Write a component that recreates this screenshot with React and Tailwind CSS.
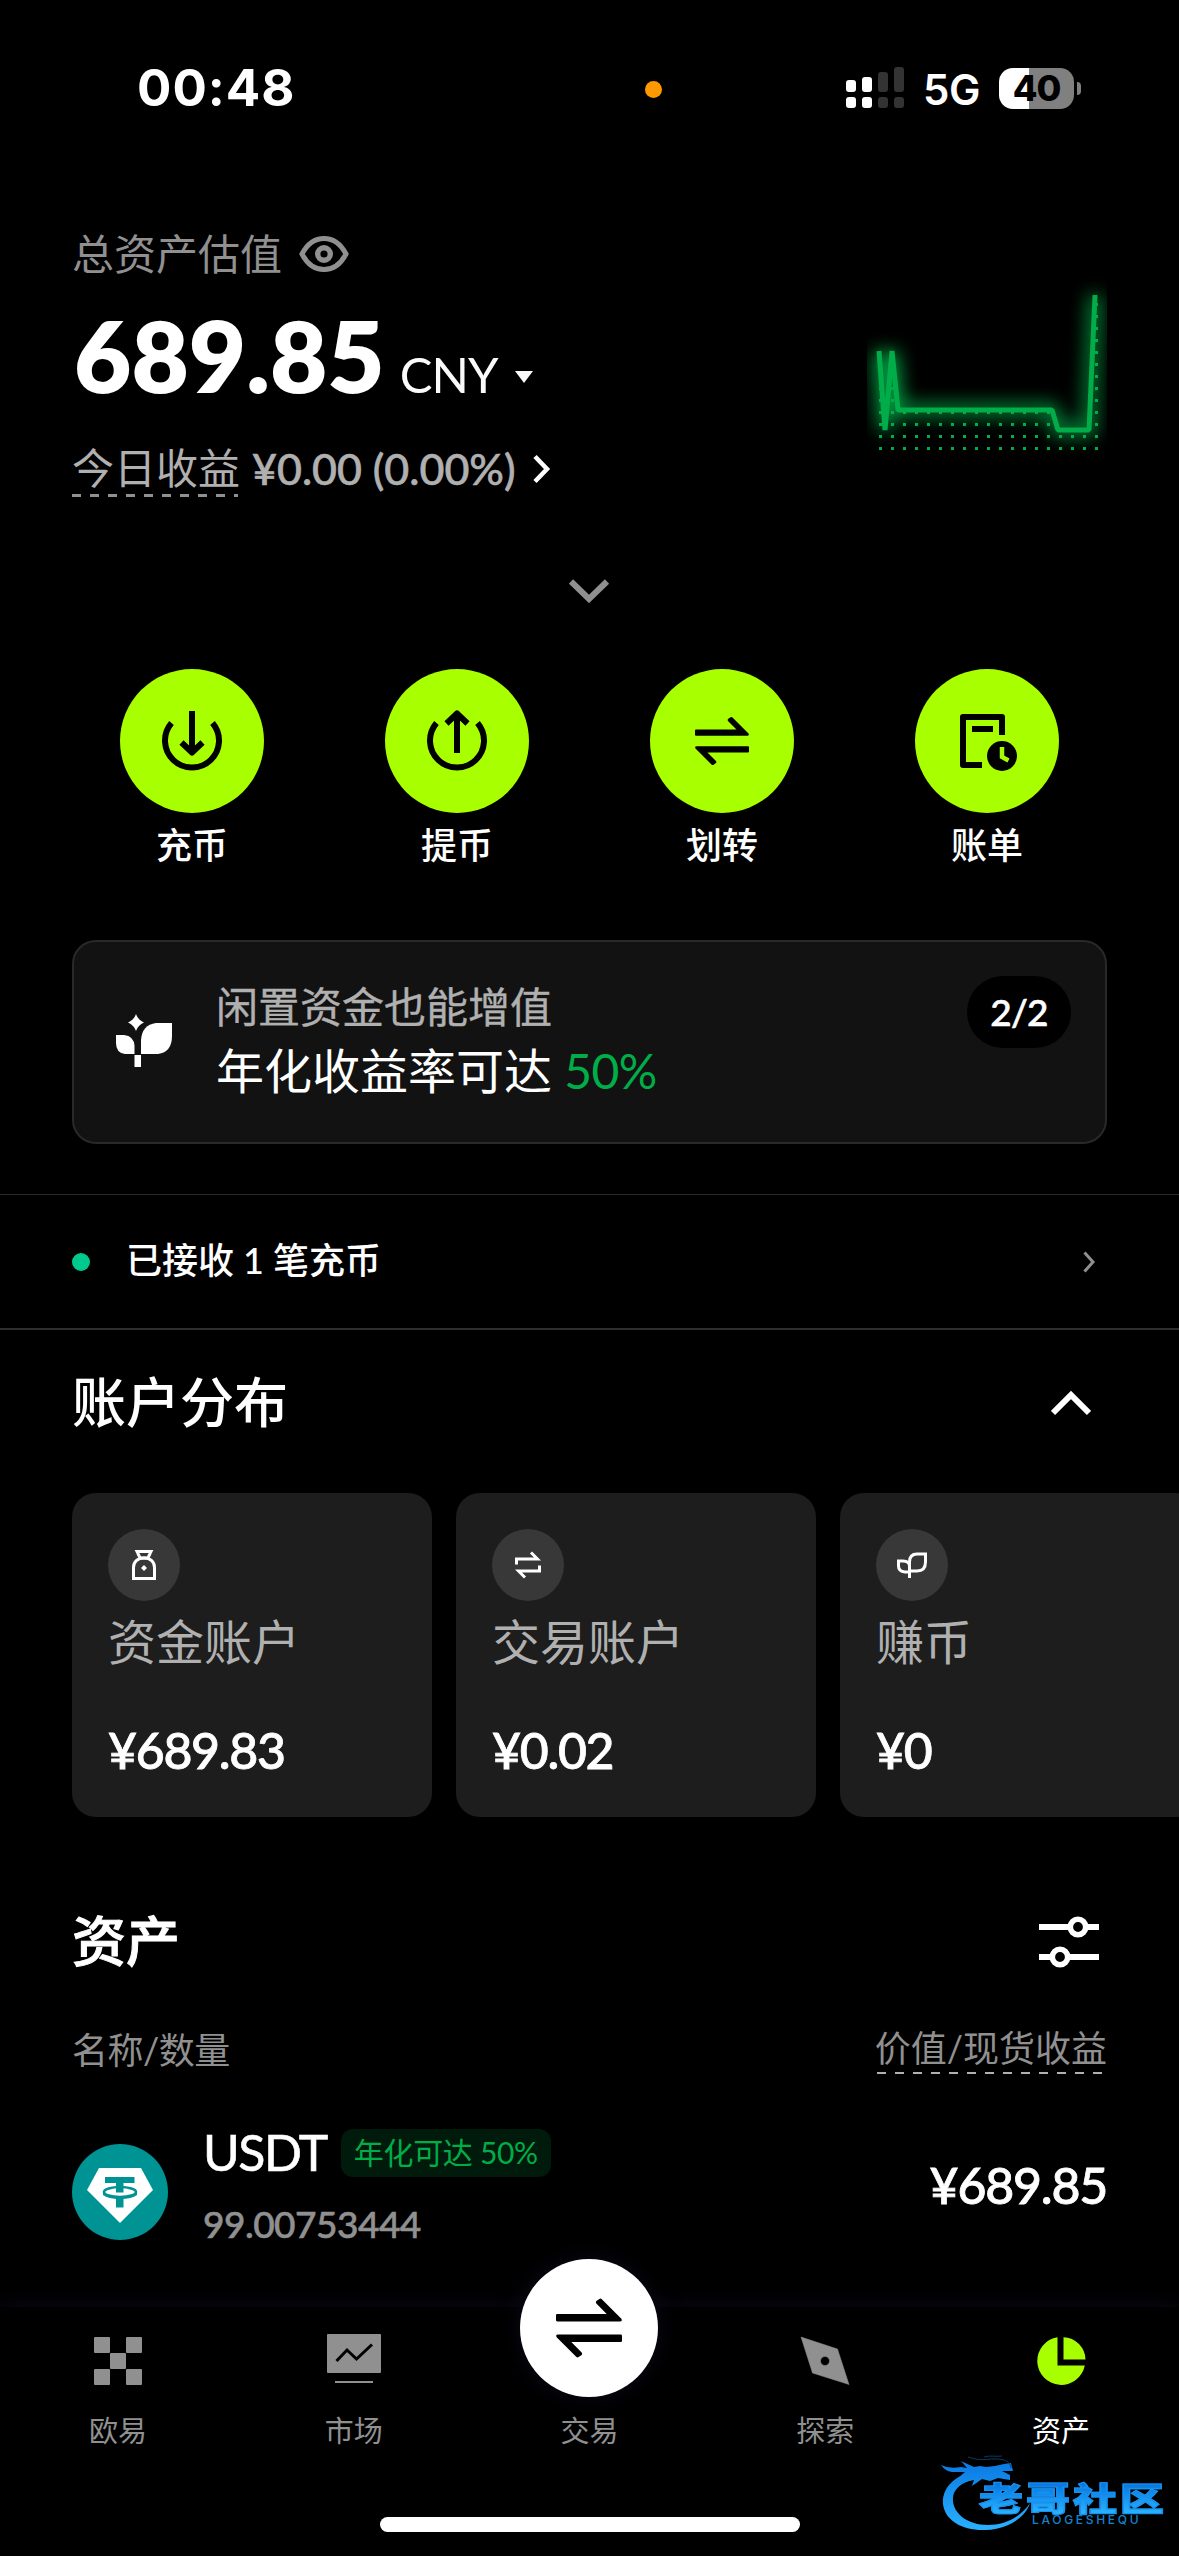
import React from 'react';

const SignalIcon = () => (
    <svg width="58" height="42" viewBox="0 0 58 42">
        <g fill="#fff">
            <rect x="0" y="13" width="10" height="12" rx="3" />
            <rect x="16" y="10" width="10" height="15" rx="3" />
            <rect x="0" y="30" width="10" height="11" rx="3" />
            <rect x="16" y="30" width="10" height="11" rx="3" />
        </g>
        <g fill="#333">
            <rect x="32" y="5" width="10" height="20" rx="3" />
            <rect x="48" y="0" width="10" height="25" rx="3" />
            <rect x="32" y="30" width="10" height="11" rx="3" />
            <rect x="48" y="30" width="10" height="11" rx="3" />
        </g>
    </svg>
);

const EyeIcon = () => (
    <svg width="50" height="38" viewBox="0 0 50 38" fill="none" stroke="#909090" strokeWidth="5">
        <path d="M3 19C8 9.500 16 3.500 25 3.500S42 9.500 47 19C42 28.500 34 34.500 25 34.500S8 28.500 3 19Z" />
        <circle cx="25" cy="19" r="6.300" strokeWidth="5.400" />
    </svg>
);

const DepositIcon = () => (
    <svg width="72" height="72" viewBox="0 0 72 72" fill="none" stroke="#000" strokeWidth="6" strokeLinejoin="round">
        <path d="M15.500 18A27 27 0 1 0 56.500 18" />
        <path d="M36 6V46M25.500 37.500L36 47.500L46.500 37.500" />
    </svg>
);

const WithdrawIcon = () => (
    <svg width="72" height="72" viewBox="0 0 72 72" fill="none" stroke="#000" strokeWidth="6" strokeLinejoin="round">
        <path d="M15.500 18A27 27 0 1 0 56.500 18" />
        <path d="M36 48V8M25.500 18.500L36 8.500L46.500 18.500" />
    </svg>
);

const SwapIcon = ({ size = 72 }) => (
    <svg width={size} height={size} viewBox="0 0 72 72" fill="#000">
        <path d="M10 24.500H50.500L42 16Q41.200 15 42 14L44.500 12.200Q45.500 11.600 46.500 12.500L62.500 28.500Q63.500 30.500 61.500 30.700H10Q9 30.700 9 29.500V25.500Q9 24.500 10 24.500Z" />
        <path d="M62 47.500H21.500L30 56Q30.800 57 30 58L27.500 59.800Q26.500 60.400 25.500 59.500L9.500 43.500Q8.500 41.500 10.500 41.300H62Q63 41.300 63 42.500V46.500Q63 47.500 62 47.500Z" />
    </svg>
);

const BillIcon = () => (
    <svg width="72" height="72" viewBox="0 0 72 72" fill="none" stroke="#000" strokeWidth="6" strokeLinejoin="round">
        <path d="M31 60H12V12H51V30" />
        <path d="M21 24H42" />
        <circle cx="51" cy="51" r="15" fill="#000" stroke="none" />
        <path d="M51 42V52L57.500 55.500" stroke="#a8ff00" strokeWidth="4.500" strokeLinejoin="miter" />
    </svg>
);

const SproutIcon = () => (
    <svg width="56" height="56" viewBox="0 0 56 56" fill="#fff">
        <path d="M20 0Q22 6 28 8.500Q22 11 20 17Q18 11 12 8.500Q18 6 20 0Z" />
        <path d="M0 21H8Q18 22 18.500 32V40H9Q0 39 0 29Z" />
        <path d="M25 40V26Q26 11 40 9H56V22Q56 38 42 40Z" />
        <rect x="18.500" y="41" width="6.500" height="12" />
    </svg>
);

const BagIcon = () => (
    <svg width="24" height="30" viewBox="0 0 24 30" fill="none" stroke="#fff" strokeWidth="3">
        <path d="M5 1.500H19L16 8H8Z" />
        <path d="M1.500 28.500V17.500C1.500 12 5.500 8 12 8S22.500 12 22.500 17.500V28.500Z" />
        <path d="M12 15L15 18L12 21L9 18Z" fill="#fff" stroke="none" />
    </svg>
);

const TransferIcon = () => (
    <svg width="26" height="28" viewBox="0 0 26 28" fill="none" stroke="#fff" strokeWidth="3">
        <path d="M1.500 13.500V8H22.500L16 1.500" />
        <path d="M24.500 14.500V20H3.500L10 26.500" />
    </svg>
);

const EarnIcon = () => (
    <svg width="30" height="26" viewBox="0 0 30 26" fill="none" stroke="#fff" strokeWidth="3">
        <path d="M12.500 26V10Q12.500 2 20 2H28.500V10Q28.500 19 20 19H12.500" />
        <path d="M12.500 20H8Q1.500 19.500 1.500 14V9H6Q12.500 9 12.500 14" />
    </svg>
);

const TetherIcon = () => (
    <svg width="96" height="96" viewBox="0 0 96 96">
        <circle cx="48" cy="48" r="48" fill="#009393" />
        <path d="M27 24H69L81 46L48 79L15 46Z" fill="#fff" strokeLinejoin="round" />
        <path d="M33 33H62.500V39H51.500V48.500H44V39H33Z" fill="#009393" />
        <ellipse cx="48" cy="48" rx="16" ry="5" fill="none" stroke="#009393" strokeWidth="2.600" />
        <path d="M44 53H51.500V63.500H44Z" fill="#009393" />
        <path d="M31 48V51Q36 55 48 55T65 51V48Q60 53 48 53T31 48Z" fill="#009393" />
    </svg>
);

const FilterIcon = () => (
    <svg width="60" height="54" viewBox="0 0 60 54" fill="none" stroke="#fff">
        <path d="M0 12H29M49 12H60M0 42H11M31 42H60" strokeWidth="6" />
        <circle cx="39" cy="12" r="7.700" strokeWidth="5.600" />
        <circle cx="21" cy="42" r="7.700" strokeWidth="5.600" />
    </svg>
);

// 24h asset curve, dots fill the area under the line
const curve = [[12, 76], [18, 155], [25, 76], [31, 135], [185, 135], [191, 155], [222, 155], [228, 20]];

const lineY = (x) => {
    for (let i = 1; i < curve.length; i++) {
        const [x1, y1] = curve[i - 1];
        const [x2, y2] = curve[i];
        if (x <= x2) return y1 + ((x - x1) / (x2 - x1)) * (y2 - y1);
    }
    return curve[curve.length - 1][1];
};

const AssetChart = () => {
    const dots = [];
    for (let col = 0; col < 19; col++) {
        for (let row = 0; row < 13; row++) {
            const x = 13.500 + col * 12;
            const y = 173.500 - row * 12;
            if (y > lineY(x)) dots.push([x, y]);
        }
    }
    const points = curve.map((p) => p.join(',')).join(' ');
    return (
        <svg width="240" height="220" viewBox="0 0 240 220" fill="none">
            <defs>
                <filter id="glow" x="-20%" y="-40%" width="140%" height="180%">
                    <feGaussianBlur stdDeviation="9" />
                </filter>
            </defs>
            <polyline points={points} stroke="#00ad48" strokeWidth="12" opacity="0.9" filter="url(#glow)" />
            {dots.map(([x, y]) => (
                <rect key={`${x}-${y}`} x={x - 1.500} y={y - 1.500} width="3" height="3" fill="#00ad48" />
            ))}
            <polyline points={points} stroke="#00ad48" strokeWidth="5" strokeLinejoin="bevel" />
        </svg>
    );
};

const DashLine = ({ width, color, height }) => (
    <svg width={width} height={height} className="block">
        <path d={`M0 ${height / 2}H${width}`} stroke={color} strokeWidth={height} strokeDasharray="9 9" />
    </svg>
);

const actions = [
    { label: '充币', icon: <DepositIcon /> },
    { label: '提币', icon: <WithdrawIcon /> },
    { label: '划转', icon: <SwapIcon /> },
    { label: '账单', icon: <BillIcon /> },
];

const accounts = [
    { name: '资金账户', amount: '¥689.83', icon: <BagIcon /> },
    { name: '交易账户', amount: '¥0.02', icon: <TransferIcon /> },
    { name: '赚币', amount: '¥0', icon: <EarnIcon /> },
];

const tabs = [
    {
        label: '欧易',
        icon: (
            <svg width="60" height="60" viewBox="0 0 60 60" fill="#909090">
                <rect x="6" y="6" width="16" height="16" rx="1" />
                <rect x="38" y="6" width="16" height="16" rx="1" />
                <rect x="22" y="22" width="16" height="16" rx="1" />
                <rect x="6" y="38" width="16" height="16" rx="1" />
                <rect x="38" y="38" width="16" height="16" rx="1" />
            </svg>
        ),
    },
    {
        label: '市场',
        icon: (
            <svg width="60" height="60" viewBox="0 0 60 60" fill="none">
                <rect x="3" y="3" width="54" height="39" rx="1" fill="#909090" />
                <path d="M12.500 30L23 19L32.500 28L48 13.500" stroke="#000" strokeWidth="3" />
                <path d="M11 51H49" stroke="#909090" strokeWidth="2" />
            </svg>
        ),
    },
    { label: '交易', center: true },
    {
        label: '探索',
        icon: (
            <svg width="60" height="60" viewBox="0 0 60 60" fill="#909090">
                <path fillRule="evenodd" d="M6 6L42.500 18L54 53.500L17.500 42Z M30 25.500A4.500 4.500 0 1 0 30 34.500A4.500 4.500 0 1 0 30 25.500Z" stroke="#909090" strokeWidth="0.500" />
            </svg>
        ),
    },
    {
        label: '资产',
        active: true,
        icon: (
            <svg width="60" height="60" viewBox="0 0 60 60" fill="#a8ff00">
                <path d="M26.500 6.200A24 24 0 1 0 53.800 34.500H26.500Z" />
                <path d="M32.500 6.200V28.500H54.500Q54.500 20 48 13Q41.500 6.500 32.500 6.200Z" />
            </svg>
        ),
    },
];

const App = () => {
    return (
        <div className="w-[1179px] h-[2556px] bg-black text-white overflow-hidden relative flex flex-col font-[Lato,'Noto_Sans_CJK_SC',sans-serif]">
            {/* Status bar */}
            <div className="h-[176px] shrink-0 flex items-center pl-[137px] pr-[98px] font-[Inter,sans-serif]">
                <div className="w-[508px] text-[51px] leading-[60px] font-bold tracking-[1px]">00:48</div>
                <div className="w-[17px] h-[17px] mt-[3px] rounded-full bg-[#ff9900]"></div>
                <div className="ml-auto flex items-center">
                    <SignalIcon />
                    <span className="w-[74px] ml-[19px] text-[42px] leading-[50px] font-semibold mt-[3px] tracking-[-0.5px]">5G</span>
                    <div className="w-[75px] h-[41px] ml-[2px] rounded-[14px] bg-[linear-gradient(90deg,#fff_40%,#808080_40%)] flex items-center justify-center text-black text-[36px] leading-none font-extrabold tracking-[-1px]">
                        40
                    </div>
                    <div className="w-[4px] h-[13px] ml-[3px] rounded-r-full bg-[#808080]"></div>
                </div>
            </div>

            {/* Balance */}
            <div className="h-[369px] shrink-0 flex justify-between px-[72px]">
                <div className="pt-[54px]">
                    <div className="flex items-center h-[48px]">
                        <span className="text-[42px] leading-[48px] text-[#909090]">总资产估值</span>
                        <span className="ml-[17px]"><EyeIcon /></span>
                    </div>
                    <div className="flex items-baseline h-[100px] mt-[27px] pl-[2px]">
                        <span className="text-[99px] leading-[100px] font-extrabold">689.85</span>
                        <span className="ml-[15px] text-[49px] leading-[60px] tracking-[-1px] text-[#fafafa]">CNY</span>
                        <svg width="18" height="22" viewBox="0 0 18 22" className="ml-[17px]">
                            <path d="M0 0H18L9 12Z" fill="#fafafa" />
                        </svg>
                    </div>
                    <div className="flex items-center h-[48px] mt-[40px] text-[#b0b0b0]">
                        <div className="flex flex-col mt-[4px]">
                            <span className="text-[42px] leading-[46px]">今日收益</span>
                            <div className="mt-[3px]">
                                <DashLine width={166} height={3} color="#909090" />
                            </div>
                        </div>
                        <span className="ml-[12px] text-[43px] leading-[48px] font-medium [-webkit-text-stroke:0.6px]">¥0.00 (0.00%)</span>
                        <svg width="18" height="30" viewBox="0 0 18 30" className="ml-[17px]" fill="none" stroke="#fff" strokeWidth="4.500">
                            <path d="M2 2.500L14 15L2 27.500" />
                        </svg>
                    </div>
                </div>
                <div className="pt-[99px]">
                    <AssetChart />
                </div>
            </div>

            <div className="h-[91px] shrink-0 flex items-center justify-center">
                <svg width="41" height="24" viewBox="0 0 41 24" fill="none" stroke="#909090" strokeWidth="6">
                    <path d="M2 2.500L20 20L38 2.500" />
                </svg>
            </div>

            {/* Quick actions */}
            <div className="grid grid-cols-4 px-[59.5px] mt-[33px]">
                {actions.map((a) => (
                    <div key={a.label} className="flex flex-col items-center">
                        <div className="w-[144px] h-[144px] rounded-full bg-[#a8ff00] flex items-center justify-center">{a.icon}</div>
                        <span className="mt-[12px] text-[36px] leading-[40px] font-medium">{a.label}</span>
                    </div>
                ))}
            </div>

            {/* Promo */}
            <div className="h-[204px] shrink-0 mx-[72px] mt-[75px] rounded-[24px] border-2 border-[#292929] bg-[#121212] flex pl-[42px] pr-[34px]">
                <div className="pt-[72px]">
                    <SproutIcon />
                </div>
                <div className="ml-[44px] pt-[41px] flex flex-col">
                    <span className="text-[42px] leading-[48px] text-[#b0b0b0] [-webkit-text-stroke:0.4px]">闲置资金也能增值</span>
                    <span className="mt-[12px] text-[48px] leading-[56px]">
                        年化收益率可达 <span className="text-[#00ad48] tracking-[-0.6px]">50%</span>
                    </span>
                </div>
                <div className="ml-auto mt-[34px] w-[104px] h-[72px] rounded-full bg-black flex items-center justify-center text-[37px] leading-[40px] font-medium tracking-[-0.8px] [-webkit-text-stroke:0.6px]">
                    2/2
                </div>
            </div>

            {/* Notice */}
            <div className="h-[136px] shrink-0 mt-[50px] border-t border-b-2 border-t-[#2a2a2a] border-b-[#2e2e2e] flex items-center pl-[72px] pr-[84px]">
                <div className="w-[18px] h-[18px] rounded-full bg-[#00c98d]"></div>
                <span className="ml-[36px] mb-[3px] text-[36px] leading-[40px] font-medium">已接收 1 笔充币</span>
                <svg width="12" height="22" viewBox="0 0 12 22" className="ml-auto" fill="none" stroke="#909090" strokeWidth="3">
                    <path d="M1.500 1.500L10 11L1.500 20.500" />
                </svg>
            </div>

            {/* Accounts */}
            <div className="h-[146px] shrink-0 flex items-center justify-between pl-[72px] pr-[88px]">
                <h2 className="text-[54px] leading-[60px] font-medium">账户分布</h2>
                <svg width="40" height="26" viewBox="0 0 40 26" fill="none" stroke="#fff" strokeWidth="6">
                    <path d="M2 23L20 5L38 23" />
                </svg>
            </div>
            <div className="flex gap-[24px] pl-[72px] mt-[17px] overflow-hidden shrink-0">
                {accounts.map((acc) => (
                    <div key={acc.name} className="w-[360px] h-[324px] shrink-0 rounded-[24px] bg-[#1d1d1d] p-[36px] flex flex-col">
                        <div className="w-[72px] h-[72px] shrink-0 rounded-full bg-[#383838] flex items-center justify-center">{acc.icon}</div>
                        <span className="mt-[13px] text-[48px] leading-[56px] text-[#b0b0b0]">{acc.name}</span>
                        <span className="mt-[50px] text-[50px] leading-[60px] font-medium tracking-[-1.3px] [-webkit-text-stroke:0.8px]">{acc.amount}</span>
                    </div>
                ))}
            </div>

            {/* Assets */}
            <div className="h-[80px] shrink-0 mt-[85px] flex items-center justify-between pl-[72px] pr-[80px]">
                <h2 className="text-[54px] leading-[60px] font-medium [-webkit-text-stroke:1px]">资产</h2>
                <FilterIcon />
            </div>
            <div className="h-[48px] shrink-0 mt-[44px] flex justify-between px-[72px] text-[36px] leading-[44px] text-[#909090]">
                <span className="mt-[2px] tracking-[-0.5px]">名称/数量</span>
                <div className="flex flex-col items-end">
                    <span>价值/现货收益</span>
                    <div className="mt-[2px]">
                        <DashLine width={230} height={2} color="#b0b0b0" />
                    </div>
                </div>
            </div>
            <div className="h-[111px] shrink-0 mt-[55px] flex px-[72px]">
                <div className="pt-[15px]"><TetherIcon /></div>
                <div className="ml-[35px] flex flex-col">
                    <div className="flex items-center h-[48px]">
                        <span className="mb-[3px] text-[50px] leading-[48px] tracking-[-1.5px] [-webkit-text-stroke:0.6px]">USDT</span>
                        <span className="ml-[14px] h-[48px] w-[210px] rounded-[12px] bg-[#001a0b] text-[#00ad48] text-[30px] leading-[46px] tracking-[-0.3px] text-center">年化可达 50%</span>
                    </div>
                    <span className="mt-[25px] text-[37px] leading-[44px] font-medium tracking-[-0.5px] text-[#909090] [-webkit-text-stroke:0.6px]">99.00753444</span>
                </div>
                <span className="ml-auto mt-[26px] text-[50px] leading-[60px] font-medium tracking-[-1.2px] [-webkit-text-stroke:0.8px]">¥689.85</span>
            </div>

            {/* Tab bar */}
            <div className="h-[249px] shrink-0 mt-[67px] bg-black shadow-[0_0_24px_#0a0a18]">
                <div className="grid grid-cols-5">
                    {tabs.map((tab) => (
                        <div key={tab.label} className="flex flex-col items-center">
                            {tab.center ? (
                                <div className="w-[138px] h-[138px] -mt-[48px] rounded-full bg-white flex items-center justify-center shadow-[0_0_24px_#0a0a18]">
                                    <SwapIcon size={88} />
                                </div>
                            ) : (
                                <div className="pt-[24px] h-[90px]">{tab.icon}</div>
                            )}
                            <span className={`mt-[16px] text-[29px] leading-[36px] ${tab.active ? 'text-white' : 'text-[#909090]'}`}>{tab.label}</span>
                        </div>
                    ))}
                </div>
                <div className="w-[420px] h-[15px] rounded-full bg-white mx-auto mt-[68px]"></div>
            </div>

            {/* Community watermark */}
            <div className="absolute left-[940px] top-[2454px] w-[225px] h-[80px]">
                <svg width="92" height="80" viewBox="0 0 92 80" className="absolute left-0 top-0">
                    <defs>
                        <linearGradient id="wm" x1="0" y1="0" x2="0" y2="80" gradientUnits="userSpaceOnUse">
                            <stop offset="0" stopColor="#0673e0" />
                            <stop offset="1" stopColor="#2bb4ff" />
                        </linearGradient>
                    </defs>
                    <g fill="url(#wm)">
                        <path d="M30 18C9 25 2 38 3 50C5 67 23 77 46 76C68 75 86 63 90 49C80 64 64 71 48 71C28 71 14 60 13 47C12 36 20 28 37 25Z" />
                        <path d="M1 11Q9 15 21 13L27 14L21 7L34 13L40 12L46 13L55 12L64 10L71 9L73 17L62 17L70 21L70 26L58 24L50 27L42 25L32 32L34 26L24 28L28 23L18 24L25 18L12 18Q5 17 1 11Z" />
                    </g>
                    <path d="M28 3C42 8 50 4 58 5S70 7 71 14M44 3C50 1 56 3 62 2" fill="none" stroke="#0a3a66" strokeWidth="1" />
                </svg>
                <div className="absolute left-[39px] top-[23px] w-[190px] h-[42px] origin-center scale-y-[0.76] text-[44px] leading-[42px] tracking-[3px] font-black whitespace-nowrap bg-gradient-to-b from-[#0673e0] to-[#2bb4ff] bg-clip-text text-transparent [-webkit-text-stroke:1.5px_#1890ee]">
                    老哥社区
                </div>
                <div className="absolute left-[92px] top-[60px] text-[12px] leading-[12px] tracking-[2.7px] font-[Inter,sans-serif] font-medium text-[#1a80cc]">LAOGESHEQU</div>
            </div>
        </div>
    );
};

export default App;
